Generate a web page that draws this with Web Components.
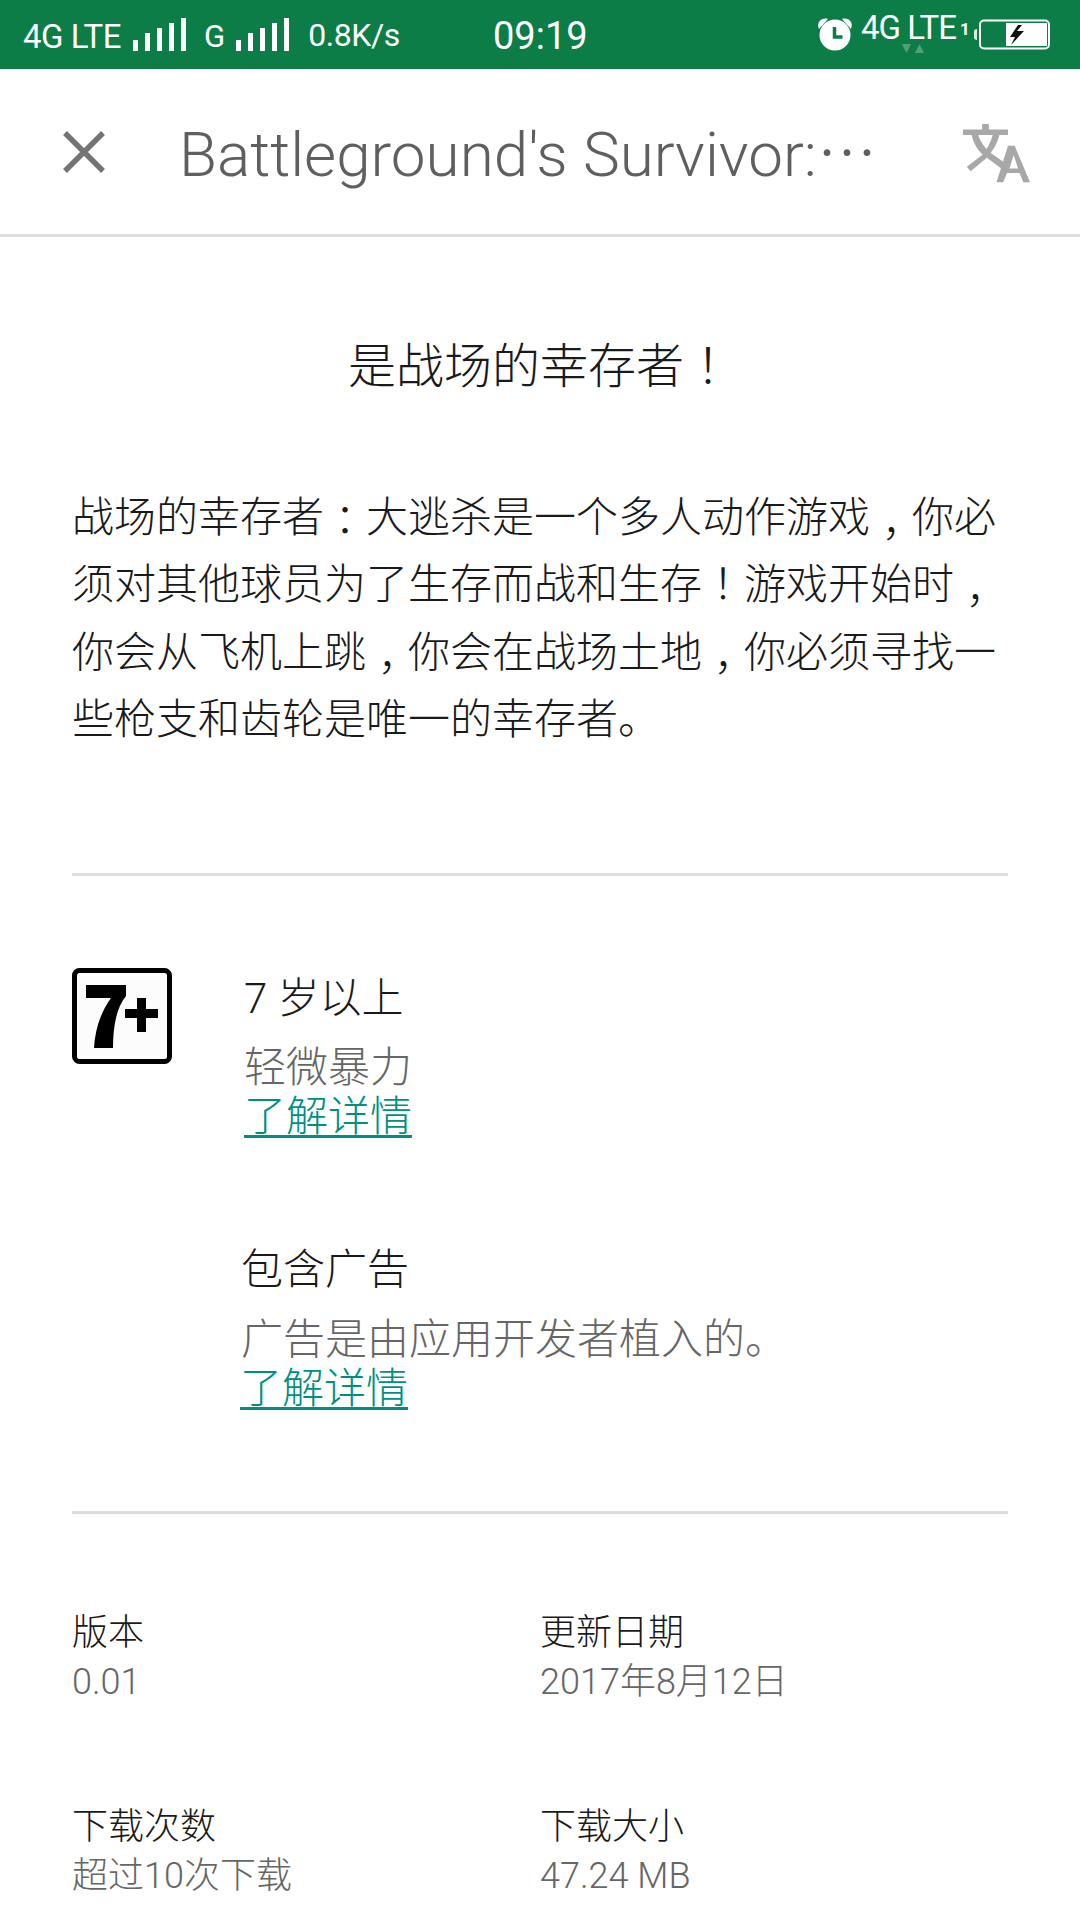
<!DOCTYPE html>
<html lang="zh-CN"><head><meta charset="utf-8"><style>
html,body{margin:0;padding:0;background:#fff}
body{width:1080px;height:1920px;overflow:hidden;font-family:Roboto,"Noto Sans CJK SC",sans-serif;color:#212121}
.p{font-family:"Noto Sans CJK TC",sans-serif;line-height:0;position:relative}
.cm{top:.4em}
.co{top:.09em}
</style></head><body>
<app-screen>
<status-bar></status-bar>
<top-bar></top-bar>
<desc-section><span slot="h">是战场的幸存者<span class="p" lang="zh-TW">！</span></span>战场的幸存者<span class="p co" lang="zh-TW">：</span>大逃杀是一个多人动作游戏<span class="p cm" lang="zh-TW">，</span>你必<br>须对其他球员为了生存而战和生存<span class="p" lang="zh-TW">！</span>游戏开始时<span class="p cm" lang="zh-TW">，</span><br>你会从飞机上跳<span class="p cm" lang="zh-TW">，</span>你会在战场土地<span class="p cm" lang="zh-TW">，</span>你必须寻找一<br>些枪支和齿轮是唯一的幸存者。</desc-section>
<h-rule style="margin-top:120px"></h-rule>
<rating-section></rating-section>
<h-rule></h-rule>
<info-grid></info-grid>
</app-screen>
<script>
function def(name,html){
  customElements.define(name,class extends HTMLElement{
    constructor(){super();this.attachShadow({mode:'open'}).innerHTML=html;}
  });
}
def('app-screen','<style>:host{display:flex;flex-direction:column;width:1080px;height:1920px;overflow:hidden}</style><slot></slot>');
def('status-bar',`<style>
:host{display:block;height:69px;flex:none;background:#0d7d47;color:#fff;font:33px Roboto,sans-serif;position:relative;box-sizing:border-box}
.l{display:flex;align-items:center;height:69px;padding-left:23px}
.t{white-space:nowrap;letter-spacing:-.5px}
svg{display:block}
.clock{font-size:38px;position:absolute;left:493px;top:14px;line-height:44px}
.lte2{position:absolute;left:861px;top:9px;font-size:33px;line-height:38px;letter-spacing:-1px}
.one{position:absolute;left:960px;top:19px;font-size:17px;font-weight:700;line-height:20px}
.s{position:absolute;left:0;top:0}
</style>
<div class="l"><span class="t" style="margin-top:4px">4G LTE</span>
<svg width="54" height="33" viewBox="0 0 54 33" style="margin:-1px 0 0 12px"><path fill="#fff" d="M0 22h5v11H0zM12 15h5v18h-5zM24 10h5v23h-5zM36 5h5v28h-5zM48 0h5v33h-5z"/></svg>
<span class="t" style="margin-left:17px;font-size:31px;margin-top:4px;letter-spacing:0">G</span>
<svg width="54" height="33" viewBox="0 0 54 33" style="margin:-1px 0 0 11px"><path fill="#fff" d="M0 22h5v11H0zM12 15h5v18h-5zM24 10h5v23h-5zM36 5h5v28h-5zM48 0h5v33h-5z"/></svg>
<span class="t" style="margin-left:18px;font-size:32px;letter-spacing:-.4px;margin-top:1px">0.8K/s</span></div>
<span class="clock">09:19</span>
<svg class="s" width="1080" height="69" viewBox="0 0 1080 69">
<circle cx="835" cy="35" r="15.500" fill="#fff"/><path d="M819 29c-3-7 3-12 9-10zM851 29c3-7-3-12-9-10z" fill="#fff"/>
<path d="M834.500 27v10h8" stroke="#0d7d47" stroke-width="3.500" fill="none"/>
<path d="M902 44h9l-4.500 9zM915 53h9l-4.500-9z" fill="#fff" fill-opacity=".28"/>
<path d="M977 29v11a3 3 0 0 1-3-3v-5a3 3 0 0 1 3-3z" fill="#fff" fill-opacity=".85"/>
<rect x="980" y="20.500" width="69" height="28" rx="4" fill="none" stroke="#fff" stroke-width="2"/>
<rect x="1006" y="23" width="41" height="23" fill="#fff"/>
<path d="M1018 25l-8 12h5l-4 8 13-14h-7l5-6z" fill="#111"/>
</svg>
<span class="lte2">4G LTE</span><span class="one">1</span>`);
def('top-bar',`<style>
:host{display:flex;align-items:center;height:168px;box-sizing:border-box;border-bottom:3px solid #ddd;background:#fff;flex:none}
.x{margin-left:59px;width:50px;height:50px;flex:none}
.ti{margin-left:70px;font:300 62px Roboto,"Noto Sans CJK SC",sans-serif;color:#5f5f5f;white-space:nowrap;width:784px;flex:none;position:relative;top:3px}
.e{font-family:"Noto Sans CJK SC",sans-serif;font-size:60px;font-weight:300;line-height:0}
.tr{flex:none;position:relative;top:2px}
</style>
<svg class="x" viewBox="0 0 50 50"><path d="M6 6l38 38M44 6L6 44" stroke="#757575" stroke-width="5.500" fill="none"/></svg>
<span class="ti">Battleground's Survivor:<span class="e">…</span></span>
<svg class="tr" width="67" height="60" viewBox="0 0 70 66" preserveAspectRatio="none"><g fill="#a8a8a8"><path d="M0 6h47v6H0z"/><path d="M20 0h7v8h-7z"/><path d="M9 12h7c2 7 7 15 13 20l15 11-4 6-15-12C15 30 11 21 9 12z"/><path d="M31 12h7c-2 9-7 18-14 26L8 52l-4-5 16-13c5-6 9-14 11-22z"/><path d="M47 24h7l16 40h-7l-4-10H46l-4 10h-7zm1.500 25h9L53 34z" fill-rule="evenodd"/></g></svg>`);
def('desc-section',`<style>
:host{display:block;padding:0 60px 0 72px;flex:none}
h1{margin:0;padding-top:102px;text-align:center;font:300 48px/56px Roboto,"Noto Sans CJK SC",sans-serif;color:#1a1a1a;margin-left:-12px;white-space:nowrap}
p{margin:0;padding-top:89px;font:300 42px/67.300px Roboto,"Noto Sans CJK SC",sans-serif;color:#1a1a1a;white-space:nowrap}
</style><h1><slot name="h"></slot></h1><p><slot></slot></p>`);
def('h-rule','<style>:host{display:block;height:3px;background:#ddd;margin:0 72px;flex:none}</style>');
def('rating-section',`<style>
:host{display:block;height:635px;flex:none;font-family:Roboto,"Noto Sans CJK SC",sans-serif;font-weight:300}
.row{display:flex}
.ic{flex:none;margin-left:72px;margin-top:92px;width:100px;height:96px}
.b{margin-left:72px;margin-top:98px}
.b2{margin-left:241px;margin-top:104px}
.a{font-size:42px;line-height:50px;color:#1a1a1a;white-space:nowrap}
.c{font-size:42px;line-height:48px;color:#666;margin-top:20px;white-space:nowrap}
.b2 .c{margin-top:21px}
.b2 a{margin-left:-1px}
a{display:block;font-size:42px;line-height:48px;color:#009080;text-decoration:underline;text-underline-offset:4px;text-decoration-thickness:3px;width:max-content;margin-top:1px}
</style>
<div class="row"><svg class="ic" viewBox="0 0 100 96"><rect x="2.500" y="2.500" width="95" height="91" rx="5" fill="#fcfcfc" stroke="#000" stroke-width="5"/><path fill="#000" d="M14 17h40v11C44 40 41 60 41 80H22c1-20 8-38 17-50H14z"/><path fill="#000" d="M65 30h9v11h12v9H74v14h-9V50H53v-9h12z"/></svg>
<div class="b"><div class="a">7 岁以上</div><div class="c">轻微暴力</div><a>了解详情</a></div></div>
<div class="b2"><div class="a">包含广告</div><div class="c">广告是由应用开发者植入的。</div><a>了解详情</a></div>`);
def('info-grid',`<style>
:host{display:grid;grid-template-columns:468px 1fr;padding:95px 0 0 72px;row-gap:96px;flex:none;font-family:Roboto,"Noto Sans CJK SC",sans-serif;font-weight:300}
.k{font-size:36px;line-height:48px;color:#1a1a1a}
.v{font-size:36px;line-height:50px;color:#666;white-space:nowrap}
</style>
<div><div class="k">版本</div><div class="v">0.01</div></div>
<div><div class="k">更新日期</div><div class="v">2017年8月12日</div></div>
<div><div class="k">下载次数</div><div class="v">超过10次下载</div></div>
<div><div class="k">下载大小</div><div class="v">47.24 MB</div></div>`);
</script></body></html>
